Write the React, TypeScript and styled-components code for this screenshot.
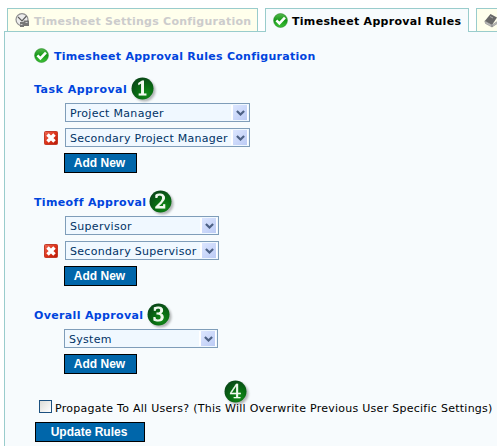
import React from 'react';
import styled, { createGlobalStyle } from 'styled-components';

const Global = createGlobalStyle`
  * { box-sizing: border-box; }
  html, body { margin: 0; background: #fff; overflow: hidden; }
  body { font: 11px/14px Verdana, "DejaVu Sans", sans-serif; color: #000; }
  svg { display: block; flex: none; }
`;

const Page = styled.main`
  width: 497px;
  height: 446px;
  padding: 8px 0 0 4px;
  overflow: hidden;
  display: flex;
  flex-direction: column;
`;

const Tabs = styled.nav`
  display: flex;
  gap: 7px;
  height: 24px;
  padding-left: 3px;
  margin-bottom: -1px;
  position: relative;
  z-index: 1;
`;

const Tab = styled.div<{ $w: number; $active?: boolean }>`
  flex: none;
  width: ${(p) => p.$w}px;
  height: ${(p) => (p.$active ? 24 : 23)}px;
  padding: 4px 0 0 7px;
  display: flex;
  gap: 4px;
  border: 1px solid #99cccc;
  border-bottom: 0;
  background: ${(p) => (p.$active ? '#f7fbfd' : '#ffffec')};
  color: ${(p) => (p.$active ? '#000' : '#cccccc')};
`;

const Label = styled.span<{ $ls: number; $bold?: boolean; $drop?: number }>`
  white-space: nowrap;
  font-weight: ${(p) => (p.$bold ? 700 : 400)};
  letter-spacing: ${(p) => p.$ls}px;
  padding-top: ${(p) => p.$drop ?? 0}px;
`;

const Panel = styled.section`
  flex: 1;
  border: 1px solid #99cccc;
  border-width: 1px 0 0 1px;
  background: #f7fbfd;
  padding: 16px 0 0 29px;
`;

const Title = styled.header`
  display: flex;
  gap: 5px;
  height: 15px;
  color: #0044dd;
`;

const Group = styled.section<{ $top: number }>`
  margin-top: ${(p) => p.$top}px;
`;

const GroupHead = styled.div`
  display: flex;
  height: 26px;
  color: #0044dd;
`;

const HeadText = styled.div<{ $w: number }>`
  width: ${(p) => p.$w}px;
  padding-top: 6px;
  flex: none;
`;

const Row = styled.div<{ $indent?: number }>`
  display: flex;
  align-items: center;
  height: 19px;
  margin-bottom: 6px;
  padding-left: ${(p) => p.$indent ?? 31}px;
`;

const RemoveSlot = styled.span`
  width: 21px;
  flex: none;
`;

const Select = styled.div<{ $w: number }>`
  width: ${(p) => p.$w}px;
  height: 19px;
  flex: none;
  display: flex;
  justify-content: space-between;
  border: 1px solid #7f9db9;
  background: #f0f8ff;
  color: #003366;
  padding: 1px 1px 1px 4px;
`;

const Arrow = styled.span`
  width: 17px;
  flex: none;
  display: flex;
  align-items: center;
  justify-content: center;
  border: 1px solid #fff;
  border-width: 0 1px 0 2px;
  background: linear-gradient(135deg, #dce6ff, #bccbf5);
`;

const Button = styled.button<{ $w: number; $indent?: number }>`
  display: block;
  width: ${(p) => p.$w}px;
  height: 20px;
  margin: 0 0 0 ${(p) => p.$indent ?? 0}px;
  padding: 0 2px 0 0;
  border: 1px solid #000;
  background: #0066aa;
  color: #fff;
  font: bold 12px/18px "Liberation Sans", Arial, sans-serif;
`;

const Footer = styled.section`
  padding: 6px 0 0 1px;
`;

const NoteRow = styled.div`
  display: flex;
  height: 20px;
  padding-left: 189px;
`;

const CheckRow = styled.label`
  display: flex;
  gap: 3px;
  height: 22px;
  padding-left: 4px;
`;

const Box = styled.span`
  width: 13px;
  height: 13px;
  flex: none;
  border: 1px solid #1c5180;
  background: linear-gradient(135deg, #dcdcd7, #fff);
`;

const BadgeSvg = styled.svg`
  overflow: visible;
  filter: drop-shadow(2px 2px 1px rgba(0, 0, 0, 0.28));
`;

const Digit = styled.text`
  font: 19px "DejaVu Serif", serif;
`;

function Badge({ n }: { n: number }) {
  return (
    <BadgeSvg width="23" height="23" viewBox="0 0 23 23">
      <defs>
        <radialGradient id={`g${n}`} cx=".65" cy=".75" r=".75">
          <stop offset="0" stopColor="#128a18" />
          <stop offset=".5" stopColor="#086c12" />
          <stop offset="1" stopColor="#0a4a18" />
        </radialGradient>
      </defs>
      <circle cx="11.5" cy="11.5" r="11" fill={`url(#g${n})`} />
      <Digit x="11.5" y="18" textAnchor="middle" fill="#f2faf0" stroke="#f2faf0" strokeWidth={n === 4 ? 0.3 : 1}>{n}</Digit>
    </BadgeSvg>
  );
}

function Check() {
  return (
    <svg width="15" height="15" viewBox="0 0 15 15">
      <defs>
        <linearGradient id="ck" x1="0" y1="0" x2="0" y2="1">
          <stop offset="0" stopColor="#54b84c" />
          <stop offset=".5" stopColor="#159a18" />
          <stop offset="1" stopColor="#3fc438" />
        </linearGradient>
      </defs>
      <circle cx="7.5" cy="7.5" r="6.9" fill="url(#ck)" stroke="#2a8a2c" strokeWidth=".6" />
      <path d="M3.4 7.3 6.4 10.3 11.9 4.7" fill="none" stroke="#fff" strokeWidth="2.6" />
    </svg>
  );
}

function Remove() {
  return (
    <svg width="14" height="14" viewBox="0 0 14 14">
      <defs>
        <linearGradient id="rm" x1="0" y1="0" x2="1" y2="1">
          <stop offset="0" stopColor="#ee6a55" />
          <stop offset=".5" stopColor="#dd3218" />
          <stop offset="1" stopColor="#b81a08" />
        </linearGradient>
      </defs>
      <rect x=".5" y=".5" width="13" height="13" rx="1" fill="url(#rm)" stroke="#c23a28" />
      <path d="M3.5 3.5 10.5 10.5M10.5 3.5 3.5 10.5" stroke="#fff" strokeWidth="3.5" />
    </svg>
  );
}

function Gauge() {
  return (
    <svg width="15" height="15" viewBox="0 0 15 15">
      <circle cx="7" cy="6.6" r="6" fill="#ececec" stroke="#909090" strokeWidth="1.2" />
      <path d="M3 4 7 8 11.5 3" fill="none" stroke="#5c5c5c" strokeWidth="1.2" />
      <path d="M5 9h4v5H5zM8.5 7.5h5.5L14 13H9z" fill="#777" />
      <path d="M5.5 11.5h2M10.5 9.5h2" stroke="#ccc" />
    </svg>
  );
}

function Book() {
  return (
    <svg width="16" height="15" viewBox="0 0 16 15">
      <path d="M6.5 1 13 4.5 8 12 .8 8z" fill="#686868" />
      <path d="M.8 8 8 12v2L1.5 10.5zM8 12l6-4v2l-6 4z" fill="#bdbdbd" stroke="#858585" strokeWidth=".6" />
      <path d="M6 3.5 9 5" stroke="#aaa" />
    </svg>
  );
}

function Dropdown({ w, text, ls }: { w: number; text: string; ls: number }) {
  return (
    <Select $w={w}>
      <Label $ls={ls} $drop={2}>{text}</Label>
      <Arrow>
        <svg width="9" height="6" viewBox="0 0 9 6">
          <path d="M.9 1 4.5 4.5 8.1 1" fill="none" stroke="#4d6185" strokeWidth="2.2" />
        </svg>
      </Arrow>
    </Select>
  );
}

export default function App() {
  return (
    <>
      <Global />
      <Page>
        <Tabs>
          <Tab $w={251}><Gauge /><Label $bold $ls={0.25} $drop={2}>Timesheet Settings Configuration</Label></Tab>
          <Tab $w={204} $active><Check /><Label $bold $ls={0.3} $drop={2}>Timesheet Approval Rules</Label></Tab>
          <Tab $w={60}><Book /></Tab>
        </Tabs>
        <Panel>
          <Title><Check /><Label $bold $ls={0.28} $drop={2}>Timesheet Approval Rules Configuration</Label></Title>
          <Group $top={14}>
            <GroupHead><HeadText $w={97}><Label $bold $ls={0.5}>Task Approval</Label></HeadText><Badge n={1} /></GroupHead>
            <Row><Dropdown w={185} text="Project Manager" ls={0.3} /></Row>
            <Row $indent={10}><RemoveSlot><Remove /></RemoveSlot><Dropdown w={185} text="Secondary Project Manager" ls={0.27} /></Row>
            <Button $w={73} $indent={30}>Add New</Button>
          </Group>
          <Group $top={17}>
            <GroupHead><HeadText $w={115}><Label $bold $ls={0.35}>Timeoff Approval</Label></HeadText><Badge n={2} /></GroupHead>
            <Row><Dropdown w={154} text="Supervisor" ls={0.3} /></Row>
            <Row $indent={10}><RemoveSlot><Remove /></RemoveSlot><Dropdown w={154} text="Secondary Supervisor" ls={0.3} /></Row>
            <Button $w={73} $indent={30}>Add New</Button>
          </Group>
          <Group $top={17}>
            <GroupHead><HeadText $w={113}><Label $bold $ls={0.35}>Overall Approval</Label></HeadText><Badge n={3} /></GroupHead>
            <Row $indent={30}><Dropdown w={154} text="System" ls={0.3} /></Row>
            <Button $w={73} $indent={30}>Add New</Button>
          </Group>
          <Footer>
            <NoteRow><Badge n={4} /></NoteRow>
            <CheckRow><Box /><Label $ls={0.265} $drop={2}>Propagate To All Users? (This Will Overwrite Previous User Specific Settings)</Label></CheckRow>
            <Button $w={110}>Update Rules</Button>
          </Footer>
        </Panel>
      </Page>
    </>
  );
}
